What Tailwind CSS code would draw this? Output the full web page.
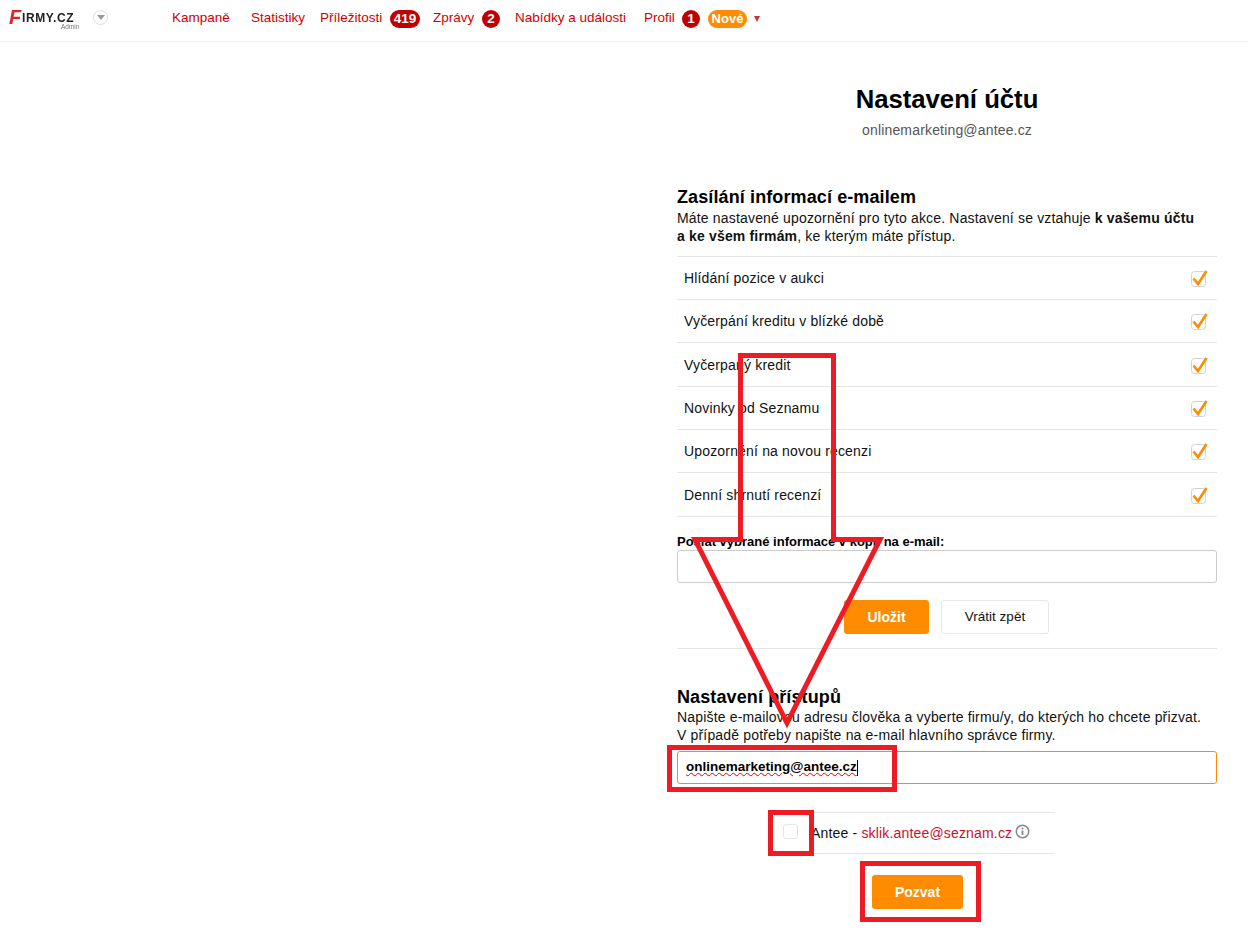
<!DOCTYPE html>
<html lang="cs">

<head>
    <meta charset="UTF-8">
    <title>Nastavení účtu - Firmy.cz Admin</title>
    <script src="https://cdn.jsdelivr.net/npm/@tailwindcss/browser@4"></script>
</head>

<body class="bg-white font-['Liberation_Sans',Arial,sans-serif] text-[14px] text-[#111]">
    <div class="relative w-[1248px] h-[946px] overflow-hidden">
        <!-- top menu -->
        <header class="h-[42px] border-b border-[#eeeeee] flex items-start text-[13.5px] text-[#d40000]">
            <div class="w-[172px] h-[41px] flex items-start shrink-0 pl-[9px] pt-[7px]">
                <div class="w-[73px] leading-none relative h-[24px] blur-[0.4px]">
                    <span class="absolute left-0 top-0 text-[20px] font-bold italic text-[#d9262c]">F</span>
                    <span class="absolute left-[13px] top-[5px] text-[12px] font-bold tracking-[0.6px] text-[#222222]">IRMY.CZ</span>
                    <span class="absolute left-[52px] top-[17px] text-[6.5px] text-[#777]">Admin</span>
                </div>
                <div class="ml-[11px] mt-[3px] w-[15px] h-[15px] rounded-full border border-[#dddddd] flex items-center justify-center">
                    <div class="w-0 h-0 border-l-[4px] border-r-[4px] border-t-[5px] border-l-transparent border-r-transparent border-t-[#999999]"></div>
                </div>
            </div>
            <nav class="flex items-center h-[37px]">
                <a class="w-[79px]">Kampaně</a>
                <a class="w-[69px]">Statistiky</a>
                <a class="w-[70px]">Příležitosti</a>
                <span class="w-[30px] h-[18px] rounded-full bg-[#c00000] text-white font-bold text-center leading-[18px]">419</span>
                <a class="ml-[13px] w-[49px]">Zprávy</a>
                <span class="w-[18px] h-[18px] rounded-full bg-[#c00000] text-white font-bold text-center leading-[18px]">2</span>
                <a class="ml-[15px] w-[129px]">Nabídky a události</a>
                <a class="w-[38px]">Profil</a>
                <span class="w-[18px] h-[18px] rounded-full bg-[#c00000] text-white font-bold text-center leading-[18px]">1</span>
                <span class="ml-[8px] w-[39px] h-[18px] rounded-full bg-[#ff8c00] text-white text-[13px] font-bold text-center leading-[18px]">Nové</span>
                <div class="ml-[7px] w-0 h-0 border-l-[3.5px] border-r-[3.5px] border-t-[6px] border-l-transparent border-r-transparent border-t-[#c8333a]"></div>
            </nav>
        </header>

        <main class="ml-[677px] w-[540px] tracking-[0.17px]">
            <h1 class="mt-[41px] text-center text-[25.7px] leading-[32px] font-bold text-black tracking-normal">Nastavení účtu</h1>
            <p class="mt-[6px] text-center leading-[18px] text-[#555555]">onlinemarketing@antee.cz</p>

            <h2 class="mt-[47px] text-[18px] leading-[22px] font-bold text-black tracking-[0.11px]">Zasílání informací e-mailem</h2>
            <p class="mt-[1px] leading-[18px]">Máte nastavené upozornění pro tyto akce. Nastavení se vztahuje <b>k vašemu účtu<br>a ke všem firmám</b>, ke kterým máte přístup.</p>

            <ul class="mt-[11px] border-t border-[#e5e5e5]">
                <li class="h-[43px] border-b border-[#e5e5e5] flex items-center justify-between pl-[7px] pr-[10px]">Hlídání pozice v aukci
                    <svg class="overflow-visible" width="18" height="18" viewBox="0 0 18 18"><rect x="2.500" y="2.500" width="14" height="15" rx="3" fill="#fff" stroke="#d2d2d2"/><path d="M4.500 9.500l4.500 5.500L17.500 2" fill="none" stroke="#ff8c00" stroke-width="2.600"/></svg>
                </li>
                <li class="h-[43px] border-b border-[#e5e5e5] flex items-center justify-between pl-[7px] pr-[10px]">Vyčerpání kreditu v blízké době
                    <svg class="overflow-visible" width="18" height="18" viewBox="0 0 18 18"><rect x="2.500" y="2.500" width="14" height="15" rx="3" fill="#fff" stroke="#d2d2d2"/><path d="M4.500 9.500l4.500 5.500L17.500 2" fill="none" stroke="#ff8c00" stroke-width="2.600"/></svg>
                </li>
                <li class="h-[44px] border-b border-[#e5e5e5] flex items-center justify-between pl-[7px] pr-[10px]"><span class="pt-[1px]">Vyčerpaný kredit</span>
                    <svg class="overflow-visible" width="18" height="18" viewBox="0 0 18 18"><rect x="2.500" y="2.500" width="14" height="15" rx="3" fill="#fff" stroke="#d2d2d2"/><path d="M4.500 9.500l4.500 5.500L17.500 2" fill="none" stroke="#ff8c00" stroke-width="2.600"/></svg>
                </li>
                <li class="h-[43px] border-b border-[#e5e5e5] flex items-center justify-between pl-[7px] pr-[10px]">Novinky od Seznamu
                    <svg class="overflow-visible" width="18" height="18" viewBox="0 0 18 18"><rect x="2.500" y="2.500" width="14" height="15" rx="3" fill="#fff" stroke="#d2d2d2"/><path d="M4.500 9.500l4.500 5.500L17.500 2" fill="none" stroke="#ff8c00" stroke-width="2.600"/></svg>
                </li>
                <li class="h-[43px] border-b border-[#e5e5e5] flex items-center justify-between pl-[7px] pr-[10px]">Upozornění na novou recenzi
                    <svg class="overflow-visible" width="18" height="18" viewBox="0 0 18 18"><rect x="2.500" y="2.500" width="14" height="15" rx="3" fill="#fff" stroke="#d2d2d2"/><path d="M4.500 9.500l4.500 5.500L17.500 2" fill="none" stroke="#ff8c00" stroke-width="2.600"/></svg>
                </li>
                <li class="h-[44px] border-b border-[#e5e5e5] flex items-center justify-between pl-[7px] pr-[10px]"><span class="pt-[1px]">Denní shrnutí recenzí</span>
                    <svg class="overflow-visible" width="18" height="18" viewBox="0 0 18 18"><rect x="2.500" y="2.500" width="14" height="15" rx="3" fill="#fff" stroke="#d2d2d2"/><path d="M4.500 9.500l4.500 5.500L17.500 2" fill="none" stroke="#ff8c00" stroke-width="2.600"/></svg>
                </li>
            </ul>

            <label class="block mt-[17px] text-[13px] leading-[15px] font-bold text-black tracking-normal">Poslat vybrané informace v kopii na e-mail:</label>
            <input type="text" class="block mt-[1px] w-full h-[33px] border border-[#cccccc] rounded-[3px] bg-white">

            <div class="mt-[17px] ml-[167px] flex gap-[12px] tracking-normal">
                <button class="w-[85px] h-[34px] rounded-[3px] bg-[#ff8c00] text-white font-bold">Uložit</button>
                <button class="w-[108px] h-[34px] rounded-[3px] border border-[#e8e8e8] bg-white text-[13.5px]">Vrátit zpět</button>
            </div>
            <div class="mt-[14px] border-t border-[#e5e5e5]"></div>

            <h2 class="mt-[37px] text-[18px] leading-[22px] font-bold text-black tracking-[0.11px]">Nastavení přístupů</h2>
            <p class="leading-[18px]">Napište e-mailovou adresu člověka a vyberte firmu/y, do kterých ho chcete přizvat.<br>V případě potřeby napište na e-mail hlavního správce firmy.</p>

            <div class="mt-[7px] h-[33px] border border-[#ff8c00] rounded-[3px] flex items-center pl-[8px] font-bold text-black text-[13.5px] tracking-normal">
                <span class="underline decoration-wavy decoration-[#e00000] decoration-1">onlinemarketing@antee.cz</span><span class="w-px h-[16px] bg-black"></span>
            </div>

            <div class="mt-[28px] ml-[93px] w-[285px] h-[42px] border-y border-[#e5e5e5] flex items-center">
                <span class="ml-[13px] mb-[3px] w-[15px] h-[15px] rounded-[3px] border border-[#e5e5e5] bg-white"></span>
                <span class="ml-[13px]">Antee - <a class="text-[#c8102e]">sklik.antee@seznam.cz</a></span>
                <svg class="ml-[3px] mb-[3px]" width="15" height="15" viewBox="0 0 15 15"><circle cx="7.500" cy="7.500" r="6.200" fill="none" stroke="#888888" stroke-width="1.500"/><rect x="6.600" y="6.500" width="1.800" height="4.500" fill="#888888"/><rect x="6.600" y="3.600" width="1.800" height="1.800" fill="#888888"/></svg>
            </div>

            <button class="block mt-[21px] ml-[195px] w-[91px] h-[34px] rounded-[3px] bg-[#ff8c00] text-white font-bold tracking-normal">Pozvat</button>
        </main>

        <!-- red markers drawn over the screenshot -->
        <svg class="absolute left-0 top-0 pointer-events-none" width="1248" height="946" viewBox="0 0 1248 946">
            <g fill="none" stroke="#ed1c24" stroke-width="5">
                <path d="M740.500 355.500H833.500V539.500H880L787 723L695 539.500H740.500Z"/>
                <rect x="669.500" y="747.500" width="225" height="42"/>
                <rect x="770.500" y="812.500" width="41" height="41"/>
                <rect x="862.500" y="863.500" width="116" height="56"/>
            </g>
        </svg>
    </div>
</body>

</html>
